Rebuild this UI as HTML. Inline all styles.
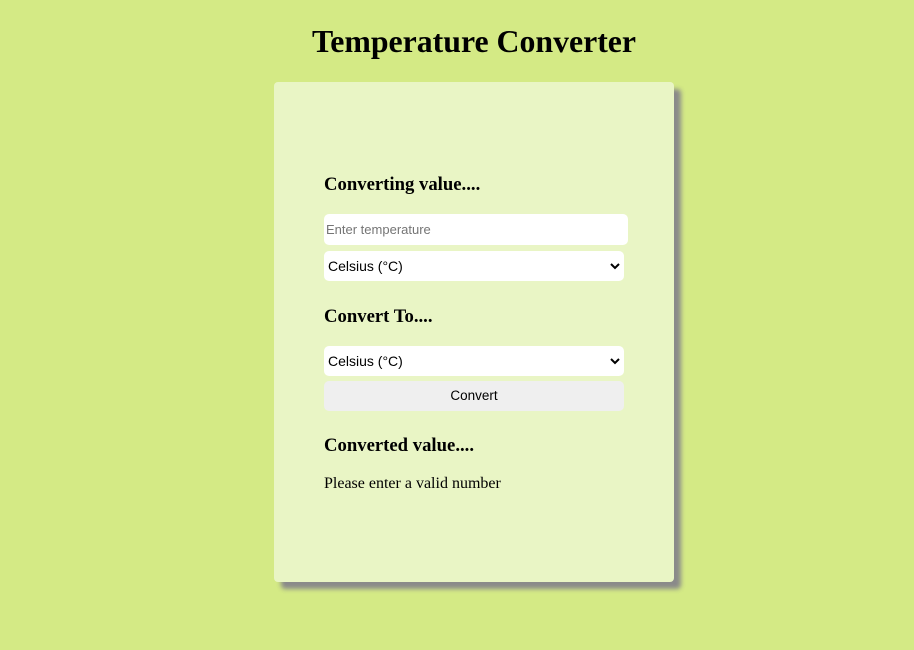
<!DOCTYPE html>
<html><head><style>
body{margin:0;background:#d4ea85;width:914px;height:650px;overflow:hidden;font-family:"Liberation Serif",serif;}
h1{position:absolute;left:274px;width:400px;top:24px;margin:0;text-align:center;font-size:31.8px;line-height:36px;font-weight:bold;}
.card{position:absolute;left:274px;top:82px;width:400px;height:500px;background:#e9f5c5;border-radius:4px;box-shadow:7px 7px 5px #8a8a8a;}
h3{position:absolute;left:50px;margin:0;font-size:18.7px;line-height:22px;font-weight:bold;}
.box{position:absolute;left:50px;background:#fff;border-radius:5px;font-family:"Liberation Sans",sans-serif;font-size:14px;box-sizing:border-box;}
.sel{width:300px;height:30px;padding:7px 4px;color:#000;}
.sel svg{position:absolute;right:4px;top:11px;}
p{position:absolute;left:50px;margin:0;font-size:16px;top:393px;}
</style></head><body>
<h1>Temperature Converter</h1>
<div class="card">
<h3 style="top:92px">Converting value....</h3>
<div class="box" style="top:132px;width:304px;height:31px;padding:8px 2px;color:#757575;font-size:13px">Enter temperature</div>
<div class="box sel" style="top:169px">Celsius (°C)<svg width="10" height="8" viewBox="0 0 10 8"><path d="M1 2l4 4 4-4" stroke="#000" stroke-width="2" fill="none"/></svg></div>
<h3 style="top:224px">Convert To....</h3>
<div class="box sel" style="top:264px">Celsius (°C)<svg width="10" height="8" viewBox="0 0 10 8"><path d="M1 2l4 4 4-4" stroke="#000" stroke-width="2" fill="none"/></svg></div>
<div class="box" style="top:299px;width:300px;height:30px;background:#efefef;text-align:center;line-height:30px;font-size:13.5px">Convert</div>
<h3 style="top:353px">Converted value....</h3>
<p>Please enter a valid number</p>
</div>
</body></html>
